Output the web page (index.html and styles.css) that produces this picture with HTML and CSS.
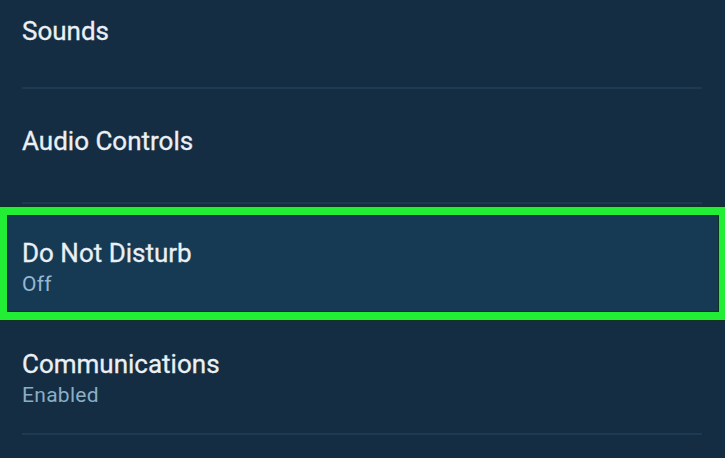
FILE: index.html
```html
<!DOCTYPE html>
<html>
<head>
<meta charset="utf-8">
<link rel="stylesheet" href="styles.css">
</head>
<body>
<div class="list">
  <div class="row first"><div class="title">Sounds</div></div>
  <div class="row"><div class="title">Audio Controls</div></div>
  <div class="selected">
    <div class="title">Do Not Disturb</div>
    <div class="sub">Off</div>
  </div>
  <div class="row two"><div class="title">Communications</div><div class="sub">Enabled</div></div>
</div>
</body>
</html>
```
FILE: styles.css
```css
html, body {
  margin: 0;
  padding: 0;
  background: #142d43;
  overflow: hidden;
}
body {
  width: 725px;
  height: 458px;
  font-family: Roboto, "Liberation Sans", sans-serif;
}
.list {
  display: flex;
  flex-direction: column;
}
.row {
  box-sizing: border-box;
  height: 115px;
  margin: 0 23px 0 22px;
  padding: 37px 0 0 0;
  border-bottom: 2px solid #1d3a52;
}
.row.first {
  height: 110px;
  margin-top: -21px;
}
.row.two {
  padding-top: 29px;
}
.title {
  font-size: 26px;
  line-height: 30px;
  font-weight: 400;
  color: #eaf0f4;
  letter-spacing: 0;
  -webkit-text-stroke: 0.3px #eaf0f4;
}
.sub {
  font-size: 21px;
  line-height: 32px;
  font-weight: 400;
  color: #8badc5;
  letter-spacing: 0.3px;
}
.selected {
  box-sizing: border-box;
  height: 113px;
  margin: 3px -2px 0 0;
  border-style: solid;
  border-color: #22ee36;
  border-width: 8px 8px 8px 7px;
  background: #173a54;
  padding: 23px 0 0 15px;
  box-shadow: 0 0 0 1px #0e3323, inset 0 0 0 1px #0e3323;
}
.selected .sub {
  color: #95b8d0;
}
```
